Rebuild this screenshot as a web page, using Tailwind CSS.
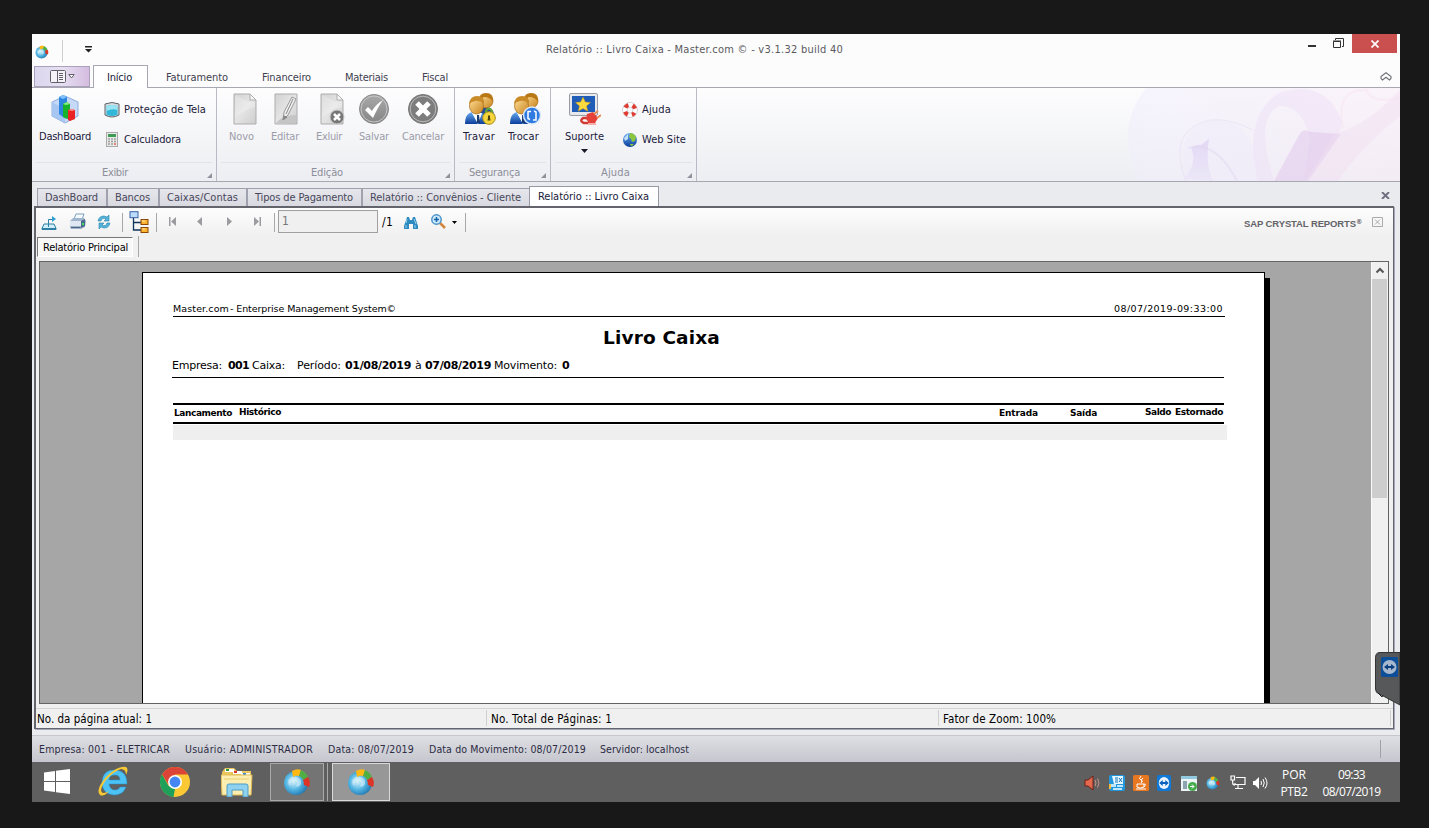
<!DOCTYPE html>
<html lang="pt-BR">
<head>
<meta charset="utf-8">
<title>Relatório :: Livro Caixa - Master.com</title>
<script src="https://cdn.jsdelivr.net/npm/@tailwindcss/browser@4"></script>
</head>
<body class="w-[1429px] h-[828px] overflow-hidden bg-[#181818] pl-8 pt-[34px] font-['DejaVu_Sans_Condensed','DejaVu_Sans',sans-serif] text-[11px] leading-[14px] text-[#20203a]">
<svg class="absolute w-0 h-0">
  <defs>
    <radialGradient id="gb" cx=".4" cy=".45" r=".65"><stop offset="0" stop-color="#d9f3fc"/><stop offset=".5" stop-color="#55b6e2"/><stop offset="1" stop-color="#1b6fab"/></radialGradient>
    <linearGradient id="gold" x1="0" y1="0" x2="1" y2="1"><stop offset="0" stop-color="#ffe09a"/><stop offset="1" stop-color="#c8831d"/></linearGradient>
    <linearGradient id="blue" x1="0" y1="0" x2="0" y2="1"><stop offset="0" stop-color="#69aef5"/><stop offset="1" stop-color="#0c3d9a"/></linearGradient>
    <linearGradient id="gray" x1="0" y1="0" x2="1" y2="1"><stop offset="0" stop-color="#d2d2d2"/><stop offset=".5" stop-color="#e4e4e4"/><stop offset="1" stop-color="#cdcdcd"/></linearGradient>
    <linearGradient id="dgray" x1="0" y1="0" x2="0" y2="1"><stop offset="0" stop-color="#a9a9a9"/><stop offset="1" stop-color="#858585"/></linearGradient>
  </defs>
  <symbol id="globe" viewBox="0 0 28 28">
    <circle cx="13" cy="15" r="12" fill="url(#gb)"/>
    <path d="M5 13q3-6 9-4 5 2 4 7-2 4-5 2 2-4-1-5-4-1-5 5-2-2-2-5" fill="#eafaff" opacity=".5"/>
    <path d="M9 3q5-3 9-1l-1 6q-4-1-7 1z" fill="#fcb813"/>
    <path d="M18 2q5 2 7 7l-5 3q-1-3-4-4z" fill="#51ae42"/>
    <path d="M25 9q3 5 1 10l-5-2q0-3-1-5z" fill="#dc3425"/>
  </symbol>
  <symbol id="people" viewBox="0 0 32 32">
    <path d="M13 24q0-11 7-10h4q7 2 7 13z" fill="#224f95"/>
    <circle cx="22" cy="8" r="7" fill="url(#gold)" stroke="#a66b16" stroke-width=".7"/>
    <path d="M15 7q0-7 7-7 8 0 7 9-3-5-9-5z" fill="#b97816"/>
    <path d="M1 31q0-12 9-12h5q8 2 8 12z" fill="url(#blue)"/>
    <path d="M8 20l6 11 4-11z" fill="#fff"/><path d="M13 22h2l1 8h-3z" fill="#193d71"/>
    <ellipse cx="12.500" cy="13" rx="7" ry="8" fill="url(#gold)" stroke="#a66b16" stroke-width=".7"/>
    <path d="M5 11q1-8 8-8 8 0 7 8-4-4-9-3-4 1-6 3" fill="#c98b28"/>
  </symbol>
  <symbol id="tv" viewBox="0 0 16 16"><rect width="16" height="16" rx="2" fill="#1078d6"/><circle cx="8" cy="8" r="6" fill="#e9f4ff"/><path d="M2.500 8l4-3v2h3V5l4 3-4 3V9h-3v2z" fill="#0a62bd"/></symbol>
  <symbol id="sheet" viewBox="0 0 24 32"><path d="M1 1h16l6 6v24H1z" fill="url(#gray)" stroke="#adadad"/><path d="M2 25Q10 17 22 14V9h-6L2 2z" fill="#fff" opacity=".25"/><path d="M17 1v6h6z" fill="#f7f7f7" stroke="#adadad"/></symbol>
  <symbol id="corner" viewBox="0 0 5 5"><path d="M5 0v5H0z" fill="#8f909c"/></symbol>
</svg>

<main class="flex flex-col w-[1368px] h-[768px] bg-[#e9ebee] whitespace-nowrap">

  <header class="flex h-[31px] bg-[#fcfcfd] shrink-0">
    <svg class="w-[14px] h-[14px] ml-[3px] mt-[11px]"><use href="#globe"/></svg>
    <i class="w-px h-[22px] mt-[6px] ml-[13px] bg-[#cfcfd3]"></i>
    <svg class="w-[7px] h-[7px] ml-[22px] mt-[12px]" viewBox="0 0 7 7"><path d="M0 0h7v1.500H0zM0 3h7L3.500 6.500z" fill="#222"/></svg>
    <span class="fit ml-[454px] mt-[9px] w-[297px] text-[#5a5a5e]">Relatório :: Livro Caixa - Master.com © - v3.1.32 build 40</span>
    <i class="w-[8px] h-[2px] ml-[465px] mt-[11px] bg-[#333]"></i>
    <svg class="w-[11px] h-[11px] ml-[17px] mt-[4px]" viewBox="0 0 11 11" fill="none" stroke="#333"><path d="M2.500 2V.5h8v8H9M.5 3.500h7v6h-7zM0 3h8"/></svg>
    <div class="w-[45px] h-[19px] ml-[8px] bg-[#c9504f] flex items-center justify-center"><svg class="w-[8px] h-[8px]" viewBox="0 0 8 8"><path d="M.5.5l7 7m0-7l-7 7" stroke="#fff" stroke-width="1.700"/></svg></div>
  </header>

  <nav class="flex h-[23px] bg-[#fcfcfd] border-b border-[#a6a7b0] shrink-0 text-[#3f3f50]">
    <div class="flex items-center justify-center gap-[2px] w-[56px] h-[21px] ml-[2px] mt-px border border-[#aaa2ba] bg-linear-to-r from-[#dcd6ee] via-[#e6e0f2] to-[#d5bce0]">
      <svg class="w-[16px] h-[13px]" viewBox="0 0 16 13" fill="none" stroke="#62616a"><rect x=".5" y=".5" width="15" height="12" rx="1" fill="#f5f3f8"/><path d="M7.500 0v13M9 3.500h4M9 5.500h4M9 7.500h4M9 9.500h4"/></svg>
      <svg class="w-[7px] h-[5px]" viewBox="0 0 7 5"><path d="M.8.5h5.400L3.500 4z" fill="#fff" stroke="#62616a"/></svg>
    </div>
    <div class="w-[55px] h-[23px] ml-[3px] border border-b-0 border-[#a6a7b0] bg-white pt-[5px] pl-[13px] text-[#20203a]"><span class="fit w-[25px]">Início</span></div>
    <span class="fit w-[62px] ml-[18px] mt-[6px]">Faturamento</span>
    <span class="fit w-[49px] ml-[34px] mt-[6px]">Financeiro</span>
    <span class="fit w-[43px] ml-[34px] mt-[6px]">Materiais</span>
    <span class="fit w-[26px] ml-[34px] mt-[6px]">Fiscal</span>
    <svg class="w-[12px] h-[9px] ml-[932px] mt-[7px]" viewBox="0 0 12 9"><path d="M1 4.500L6 .8l5 3.700v2L9.500 8 6 5.200 2.500 8 1 6.500z" fill="#fff" stroke="#6f7078" stroke-width="1.100"/></svg>
  </nav>

  <section class="flex h-[94px] shrink-0 border-b border-[#a6a7b0] bg-linear-to-b from-[#fdfdfe] to-[#edeef2]">
    <div class="w-[185px] border-r border-[#b9bac6] flex flex-col">
      <div class="flex h-[74px]">
        <div class="w-[52px] ml-[7px] pt-[5px] flex flex-col items-center">
          <svg class="w-[32px] h-[32px]" viewBox="0 0 32 32"><path d="M3 9l13-6 13 6v14l-13 7-13-7z" fill="#c6d9f7" stroke="#8cacdf"/><path d="M3 23V9l13 7v14z" fill="#a8c6f2"/><path d="M10 4l4-2 4 2v22l-4-2-4-3z" fill="#2c86df"/><path d="M10 4l4-2 4 2-4 2z" fill="#81c0fa"/><path d="M14 11l4-2 3 2v16l-7-3z" fill="#17b42b"/><path d="M14 11l4-2 3 2-4 1z" fill="#8bec80"/><path d="M19 17l4-1 3 1v9l-5 2-2-1z" fill="#e92323"/><path d="M19 17l4-1 3 1-3 1z" fill="#ff9a8e"/></svg>
          <span class="fit w-[52px] mt-[5px]">DashBoard</span>
        </div>
        <div class="ml-[13px] pt-[7px] grid grid-rows-[30px_30px] items-center">
          <div class="flex items-center gap-[4px]">
            <svg class="w-[16px] h-[16px]" viewBox="0 0 16 16"><path d="M1 2q7-3 14 0v11q-7 4-14 0z" fill="#d9dadd" stroke="#5b6067"/><path d="M2.500 4q5.500-2 11 0v9q-5.500 2-11 0z" fill="#33b7d8"/><path d="M2.500 4q5.500-2 11 0v4q-5.500-2-11 1z" fill="#98e4f3"/></svg>
            <span class="fit w-[82px]">Proteção de Tela</span>
          </div>
          <div class="flex items-center gap-[4px]">
            <svg class="w-[16px] h-[16px]" viewBox="0 0 16 16"><rect x="2.500" y=".5" width="11" height="14" fill="#e9e9e9" stroke="#aaa"/><path d="M4 2h8v3H4z" fill="#3f9a54"/><path d="M4 7h2m1 0h2m1 0h2M4 9.500h2m1 0h2m1 0h2M4 12h2m1 0h2" stroke="#a0a0a0" stroke-width="1.500"/><path d="M10 12h2" stroke="#e6604c" stroke-width="1.500"/></svg>
            <span class="fit w-[57px]">Calculadora</span>
          </div>
        </div>
      </div>
      <div class="flex h-[19px] mx-[4px] border-t border-[#e2e2e7] text-[#8d8e99]"><span class="fit w-[26px] ml-[66px] mt-[3px]">Exibir</span><svg class="w-[5px] h-[5px] ml-auto mt-[10px]"><use href="#corner"/></svg></div>
    </div>

    <div class="w-[238px] border-r border-[#b9bac6] flex flex-col text-[#9b9ca8]">
      <div class="flex h-[74px] pt-[5px]">
        <div class="flex flex-col w-[25px] ml-[12px]"><svg class="w-[24px] h-[32px] ml-[4px] shrink-0"><use href="#sheet"/></svg><span class="fit w-[25px] mt-[5px]">Novo</span></div>
        <div class="flex flex-col w-[28px] ml-[17px]"><svg class="w-[24px] h-[32px] ml-[3px] shrink-0" viewBox="0 0 24 32"><path d="M1 1h22v30H1z" fill="url(#gray)" stroke="#adadad"/><path d="M2 30q7-8 20-8v8z" fill="#c5c5c5"/><path d="M18 4l4 2-8 16-5 5 1-8z" fill="#eee" stroke="#999"/><path d="M12 21l7-15M9 27l1-4 3 1z" stroke="#888" fill="#888"/></svg><span class="fit w-[28px] mt-[5px]">Editar</span></div>
        <div class="flex flex-col w-[26px] ml-[17px]"><svg class="w-[25px] h-[32px] ml-[4px] shrink-0" viewBox="0 0 25 32"><use href="#sheet" width="24" height="32"/><circle cx="17" cy="24" r="7" fill="#777" stroke="#ccc"/><path d="M14 21l6 6m0-6l-6 6" stroke="#fff" stroke-width="2.500"/></svg><span class="fit w-[26px] mt-[5px]">Exluir</span></div>
        <div class="flex flex-col w-[30px] ml-[17px]"><svg class="w-[32px] h-[32px] -ml-px shrink-0" viewBox="0 0 32 32"><circle cx="16" cy="16" r="14.500" fill="url(#dgray)" stroke="#8a8a8a"/><circle cx="16" cy="16" r="13" fill="none" stroke="#c6c6c6"/><path d="M7 17l3-3 4 4q4-7 11-11-5 7-10 18z" fill="#fff"/></svg><span class="fit w-[30px] mt-[5px]">Salvar</span></div>
        <div class="flex flex-col w-[42px] ml-[13px]"><svg class="w-[32px] h-[32px] ml-[5px] shrink-0" viewBox="0 0 32 32"><circle cx="16" cy="16" r="14.500" fill="#7d7d7d" stroke="#777"/><circle cx="16" cy="16" r="12.800" fill="none" stroke="#bababa"/><path d="M10 10l12 12m0-12L10 22" stroke="#fff" stroke-width="5"/></svg><span class="fit w-[42px] mt-[5px]">Cancelar</span></div>
      </div>
      <div class="flex h-[19px] mx-[4px] border-t border-[#e2e2e7] text-[#8d8e99]"><span class="fit w-[32px] ml-[90px] mt-[3px]">Edição</span><svg class="w-[5px] h-[5px] ml-auto mt-[10px]"><use href="#corner"/></svg></div>
    </div>

    <div class="w-[96px] border-r border-[#b9bac6] flex flex-col">
      <div class="flex h-[74px] pt-[5px]">
        <div class="flex flex-col w-[32px] ml-[8px]"><svg class="w-[32px] h-[32px] ml-px shrink-0" viewBox="0 0 32 32"><use href="#people" width="32" height="32"/><path d="M22 21v-3q3-5 6 0v3" fill="none" stroke="#61a83b" stroke-width="2"/><circle cx="25" cy="25" r="6.300" fill="#f5d53b" stroke="#a78b1a"/><path d="M24 22.500h2v2l.5 3h-3l.5-3z" fill="#4e400a"/></svg><span class="fit w-[32px] mt-[5px]">Travar</span></div>
        <div class="flex flex-col w-[31px] ml-[13px]"><svg class="w-[32px] h-[32px] ml-px shrink-0" viewBox="0 0 32 32"><use href="#people" width="32" height="32"/><circle cx="23" cy="22.500" r="8.500" fill="#2f7be2" stroke="#dce9f9" stroke-width="1.500"/><path d="M22 18.500h-3v7l2 1M24 27h3v-8l-2-1" fill="none" stroke="#fff" stroke-width="1.500"/></svg><span class="fit w-[31px] mt-[5px]">Trocar</span></div>
      </div>
      <div class="flex h-[19px] mx-[4px] border-t border-[#e2e2e7] text-[#8d8e99]"><span class="fit w-[51px] ml-[10px] mt-[3px]">Segurança</span><svg class="w-[5px] h-[5px] ml-auto mt-[10px]"><use href="#corner"/></svg></div>
    </div>

    <div class="w-[146px] border-r border-[#b9bac6] flex flex-col">
      <div class="flex h-[74px]">
        <div class="flex flex-col w-[39px] ml-[14px] pt-[5px]"><svg class="w-[32px] h-[32px] ml-[4px] shrink-0" viewBox="0 0 32 32"><rect x=".5" y=".5" width="28" height="22" rx="1.500" fill="#e7e8eb" stroke="#9a9ca5"/><path d="M3 3h23v16H3z" fill="#205db9"/><path d="M14 4l2.300 5 5.200.5-4 3.500 1.300 5.200L14 15.500 9.200 18.200l1.300-5.200-4-3.500 5.200-.5z" fill="#ffdb3f" stroke="#c79513" stroke-width=".5"/><path d="M20 30h-5q-5-2-1-5h6" fill="none" stroke="#cf3c34" stroke-width="2.500"/><path d="M18 21l6-2 5 6-3 5h-6l-3-4z" fill="#e54138"/><path d="M25 21l4-3m-1 7l4-3" stroke="#e88a54" stroke-width="2"/><path d="M19 30h8v2h-8z" fill="#f4b1ac"/></svg><span class="fit w-[39px] mt-[5px]">Suporte</span><svg class="w-[7px] h-[4px] ml-[16px] mt-[5px]" viewBox="0 0 7 4"><path d="M0 0h7L3.500 4z" fill="#1a1a2a"/></svg></div>
        <div class="ml-[18px] pt-[7px] grid grid-rows-[30px_30px] items-center">
          <div class="flex items-center gap-[4px]"><svg class="w-[16px] h-[16px]" viewBox="0 0 16 16"><circle cx="8" cy="8" r="5.200" fill="none" stroke="#b8b8bd" stroke-width="5"/><circle cx="8" cy="8" r="5.200" fill="none" stroke="#fff" stroke-width="4"/><circle cx="8" cy="8" r="5.200" fill="none" stroke="#e03b31" stroke-width="4" stroke-dasharray="4.080" stroke-dashoffset="2" transform="rotate(45 8 8)"/></svg><span class="fit w-[29px]">Ajuda</span></div>
          <div class="flex items-center gap-[4px]"><svg class="w-[16px] h-[16px]" viewBox="0 0 16 16"><circle cx="8" cy="8" r="7" fill="url(#blue)"/><path d="M8 1q4 0 6 4l-1 4-3 1-1-3-2-2zM8 12l4 0-2 2-2-1z" fill="#8cc63f"/><path d="M2 6l4-4v5l-3 2z" fill="#bfe0fa"/></svg><span class="fit w-[44px]">Web Site</span></div>
        </div>
      </div>
      <div class="flex h-[19px] mx-[4px] border-t border-[#e2e2e7] text-[#8d8e99]"><span class="fit w-[29px] ml-[46px] mt-[3px]">Ajuda</span><svg class="w-[5px] h-[5px] ml-auto mt-[10px]"><use href="#corner"/></svg></div>
    </div>

    <svg class="w-[280px] h-[93px] ml-auto" viewBox="0 0 280 93">
      <defs>
        <linearGradient id="sw" x1="0" y1="0" x2="1" y2="0"><stop offset="0" stop-color="#f0eefc"/><stop offset="1" stop-color="#f8eaf6"/></linearGradient>
        <linearGradient id="vi" x1="0" y1="0" x2="0" y2="1"><stop offset="0" stop-color="#cdb8f0"/><stop offset="1" stop-color="#e6def6"/></linearGradient>
      </defs>
      <path d="M26 0Q-6 40 18 93H280V0z" fill="url(#sw)" opacity=".55"/>
      <path d="M66 93Q53 38 95 32q38 0 48 61z" fill="#efebfa" opacity=".5"/>
      <path d="M64 91q14-16 7-31 6-4 10-3l8-6q-4 26 4 42z" fill="url(#vi)" opacity=".4"/>
      <path d="M68 60q28-8 49 33" fill="none" stroke="#e0d4f0" stroke-width="2" opacity=".45"/>
      <path d="M66 93Q46 42 90 32q20-2 43 10" fill="none" stroke="#e6dcf2" opacity=".6"/>
      <path d="M138 93Q122 28 159 5q42-13 59 20 6 10 2 17l-36 51 6-44q-8-32-31-31-25 12-5 75z" fill="#eedff5" opacity=".5"/>
      <path d="M154 93l25-46q4-7 12-3l30 2-33 47z" fill="#dfc6ec" opacity=".5"/>
      <path d="M214 46q32-8 66-44v26q-40 32-62 65h-31z" fill="#f1dcf0" opacity=".4"/>
      <path d="M223 40q-8-40 24-38M246 0q2 16 34 10" stroke="#f7e2ef" stroke-width="2" fill="none" opacity=".4"/>
    </svg>
  </section>

  <div class="flex items-end h-[24px] shrink-0 pl-[5px] text-[#47475a] bg-[#e9ebee]">
    <div class="w-[70px] h-[18px] border border-b-0 border-[#a0a1ae] bg-linear-to-b from-[#e6e6ec] to-[#d9d9e1] pl-[7px] pt-[2px]"><span class="fit w-[53px]">DashBoard</span></div>
    <div class="w-[52px] h-[18px] border border-b-0 border-[#a0a1ae] bg-linear-to-b from-[#e6e6ec] to-[#d9d9e1] pl-[7px] pt-[2px]"><span class="fit w-[35px]">Bancos</span></div>
    <div class="w-[88px] h-[18px] border border-b-0 border-[#a0a1ae] bg-linear-to-b from-[#e6e6ec] to-[#d9d9e1] pl-[7px] pt-[2px]"><span class="fit w-[71px]">Caixas/Contas</span></div>
    <div class="w-[115px] h-[18px] border border-b-0 border-[#a0a1ae] bg-linear-to-b from-[#e6e6ec] to-[#d9d9e1] pl-[7px] pt-[2px]"><span class="fit w-[98px]">Tipos de Pagamento</span></div>
    <div class="w-[167px] h-[18px] border border-b-0 border-r-0 border-[#a0a1ae] bg-linear-to-b from-[#e6e6ec] to-[#d9d9e1] pl-[7px] pt-[2px]"><span class="fit w-[151px]">Relatório :: Convênios - Cliente</span></div>
    <div class="w-[130px] h-[20px] border border-b-0 border-[#9899a5] bg-white pl-[8px] pt-[3px] text-[#20203a]"><span class="fit w-[111px]">Relatório :: Livro Caixa</span></div>
    <svg class="w-[9px] h-[7px] ml-[722px] mb-[7px]" viewBox="0 0 9 7"><path d="M1 0l7 7M8 0L1 7" stroke="#6d6e80" stroke-width="1.900"/></svg>
  </div>

  <section class="flex flex-col w-[1360px] h-[523px] ml-[2px] shrink-0 border-[1.500px] border-t-2 border-l-2 border-[#63646c] bg-[#f0f0f0] text-black shadow-[1px_1px_0_#a3a7ba]">
    <div class="flex h-[28px] shrink-0 bg-linear-to-b from-[#fdfdfd] to-[#f0f0f0]">
      <svg class="w-[16px] h-[14px] ml-[5px] mt-[8px]" viewBox="0 0 16 14" fill="none" stroke="#2d7fa5"><path d="M3 8L1 12.500h14L13 8z" fill="#cfeffa"/><path d="M1 12.500h14v1H1zM7.500 11V3.500H12" /><path d="M11 0v6l4-3z" fill="#2d9fd0" stroke="none"/></svg>
      <svg class="w-[17px] h-[16px] ml-[12px] mt-[5px]" viewBox="0 0 17 16"><path d="M5 6l2-5h8l-2 6z" fill="#f5faff" stroke="#7f9fbb"/><path d="M1 8l3-3h11l2 3-1 6-4 2H2l-1-2z" fill="#9fb4cd"/><path d="M1 8h11v5H1z" fill="#dfe8f2"/><path d="M2 14h9l1 1H2z" fill="#506683"/><path d="M12 8l4-2v7l-4 2z" fill="#4c688a"/><path d="M13 10h2v2h-2z" fill="#3fe063"/></svg>
      <svg class="w-[14px] h-[14px] ml-[11px] mt-[7px]" viewBox="0 0 14 14"><path d="M1 6q1-5 6-5l3 1 2-2v6H7l2-2Q5 2 4 6zM13 8q-1 5-6 5l-3-1-2 2V8h5l-2 2q4 2 5-2z" fill="#56b4da" stroke="#2583ad" stroke-width=".6"/></svg>
      <i class="w-px h-[19px] ml-[11px] mt-[5px] bg-[#a8a8a8]"></i>
      <svg class="w-[20px] h-[22px] ml-[6px] mt-[3px]" viewBox="0 0 20 22"><path d="M4.500 6v13H12M4.500 11.500H12" fill="none" stroke="#12335c" stroke-width="1.300"/><rect x="1" y=".7" width="8" height="6" fill="#bcdcfb" stroke="#3a62a5"/><rect x="12" y="8.500" width="7" height="5" fill="#ffb331" stroke="#8d4706"/><rect x="12" y="16.500" width="7" height="5" fill="#ffb331" stroke="#8d4706"/><path d="M13 10h3m-3 8h3" stroke="#ffe9ae"/></svg>
      <i class="w-px h-[19px] ml-[7px] mt-[5px] bg-[#a8a8a8]"></i>
      <svg class="w-[7px] h-[9px] ml-[12px] mt-[9px]" viewBox="0 0 7 9" fill="#9c9ca0"><path d="M0 0h1.500v9H0zM7 0v9L2 4.500z"/></svg>
      <svg class="w-[5px] h-[9px] ml-[21px] mt-[9px]" viewBox="0 0 5 9" fill="#9c9ca0"><path d="M5 0v9L0 4.500z"/></svg>
      <svg class="w-[5px] h-[9px] ml-[25px] mt-[9px]" viewBox="0 0 5 9" fill="#9c9ca0"><path d="M0 0v9l5-4.500z"/></svg>
      <svg class="w-[7px] h-[9px] ml-[22px] mt-[9px]" viewBox="0 0 7 9" fill="#9c9ca0"><path d="M5.500 0H7v9H5.500zM0 0v9l5-4.500z"/></svg>
      <i class="w-px h-[19px] ml-[13px] mt-[5px] bg-[#a8a8a8]"></i>
      <div class="w-[100px] h-[23px] ml-[3px] mt-[2px] border border-[#a0a0a0] bg-[#f0f0f0] pl-[3px] pt-[3px] text-[12px] text-[#777]">1</div>
      <span class="fit w-[11px] ml-[4px] mt-[7px] text-[12px]">/1</span>
      <svg class="w-[14px] h-[12px] ml-[11px] mt-[9px]" viewBox="0 0 14 12"><path d="M3 0h2l1 3h2l1-3h2l3 9v3H9V7H5v5H0V9z" fill="#2f8abf"/><path d="M2 6l1-4m7 0l2 5M2 11V8m9 3V8" stroke="#94d1ef" fill="none"/></svg>
      <svg class="w-[15px] h-[15px] ml-[13px] mt-[6px]" viewBox="0 0 15 15"><path d="M9 9l5 5" stroke="#d3853f" stroke-width="2.500"/><circle cx="5.500" cy="5.500" r="4.700" fill="#cdeafc" stroke="#4c93c9" stroke-width="1.500"/><path d="M5.500 3v5M3 5.500h5" stroke="#1864a8" stroke-width="1.500"/></svg>
      <svg class="w-[5px] h-[3px] ml-[6px] mt-[13px]" viewBox="0 0 5 3"><path d="M0 0h5L2.500 3z"/></svg>
      <i class="w-px h-[19px] ml-[8px] mt-[5px] bg-[#a8a8a8]"></i>
      <span class="fit w-[112px] ml-[778px] mt-[9px] font-['Liberation_Sans',sans-serif] font-bold text-[9.500px] text-[#636368]">SAP CRYSTAL REPORTS</span><span class="mt-[7px] w-[6px] text-[7px] font-bold text-[#636368]">®</span>
      <svg class="w-[11px] h-[10px] ml-[10px] mt-[9px]" viewBox="0 0 11 10" fill="none" stroke="#aaa"><path d="M.5.5h10v9H.5zM3 2.500l5 5m0-5l-5 5"/></svg>
    </div>
    <div class="flex h-[25px] shrink-0">
      <div class="w-[96px] h-[20px] ml-[1px] mt-px border border-t-[#777] border-l-[#777] border-b-white border-r-white bg-[#f8f8f8] pl-[5px] pt-[3px]"><span class="fit w-[85px]">Relatório Principal</span></div>
      <i class="w-px h-[21px] ml-[5px] bg-[#a8a8a8]"></i>
    </div>
    <div class="flex w-[1350px] h-[443px] ml-[3px] shrink-0 border border-[#646464] bg-[#a6a6a6] overflow-hidden">
      <div class="flex flex-col w-[1123px] h-[440px] ml-[102px] mt-[10px] bg-white border border-black border-b-0 shrink-0 font-['DejaVu_Sans',sans-serif]">
        <div class="flex h-[44px] w-[1052px] ml-[30px] pt-[29px] border-b border-black text-[9.500px]">
          <span class="fit w-[56px] h-[13px]">Master.com</span><span class="fit w-[166px] ml-[1px]">- Enterprise Management System©</span>
          <span class="fit w-[109px] ml-auto mr-[2px]">08/07/2019-09:33:00</span>
        </div>
        <h1 class="fit w-[117px] ml-[460px] mt-[9px] h-[24px] text-[18.500px] leading-[24px] font-bold">Livro Caixa</h1>
        <div class="flex w-[1052px] ml-[29px] mt-[9px] h-[19px] border-b border-black text-[11px]">
          <span class="fit w-[50px]">Empresa:</span><b class="fit w-[21px] ml-[6px]">001</b><span class="fit w-[33px] ml-[3px]">Caixa:</span><span class="fit w-[44px] ml-[12px]">Período:</span><b class="fit w-[66px] ml-[4px]">01/08/2019</b><span class="ml-[4px] w-[7px]">à</span><b class="fit w-[66px] ml-[3px]">07/08/2019</b><span class="fit w-[63px] ml-[3px]">Movimento:</span><b class="ml-[5px]">0</b>
        </div>
        <div class="flex w-[1051px] ml-[30px] mt-[25px] h-[21px] border-y-2 border-black font-bold text-[9px]">
          <span class="fit w-[58px] ml-px mt-px">Lancamento</span><span class="fit w-[42px] ml-[7px]">Histórico</span><span class="fit w-[39px] ml-[718px] mt-px">Entrada</span><span class="fit w-[27px] ml-[32px] mt-px">Saída</span><span class="fit w-[26px] ml-[48px]">Saldo</span><span class="fit w-[48px] ml-[4px]">Estornado</span>
        </div>
        <div class="w-[1054px] h-[15px] ml-[30px] mt-px bg-[#efefef]"></div>
      </div>
      <i class="w-[5px] h-[440px] mt-[16px] bg-black shrink-0"></i>
      <div class="w-[17px] ml-auto bg-[#f0f0f0] border-l border-[#fafafa] flex flex-col">
        <svg class="w-[16px] h-[17px]" viewBox="0 0 16 17"><path d="M4.500 10.500L8 7l3.500 3.500" fill="none" stroke="#555" stroke-width="2"/></svg>
        <i class="h-[219px] w-[15px] bg-[#cdcdcd]"></i>
      </div>
    </div>
    <div class="flex h-[19px] mt-[4px] border-t border-[#d5d5d5] text-[11.500px] pt-[3px]">
      <span class="fit w-[115px] ml-px">No. da página atual: 1</span>
      <i class="w-px h-[16px] -mt-[2px] ml-[334px] bg-[#cfcfcf]"></i><span class="fit w-[121px] ml-[4px]">No. Total de Páginas: 1</span>
      <i class="w-px h-[16px] -mt-[2px] ml-[326px] bg-[#cfcfcf]"></i><span class="fit w-[113px] ml-[4px]">Fator de Zoom: 100%</span>
      <i class="w-px h-[16px] -mt-[2px] ml-auto mr-[2px] bg-[#cfcfcf]"></i>
    </div>
  </section>

  <footer class="flex h-[27px] mt-[6px] shrink-0 border-t border-[#c6c7cd] bg-linear-to-b from-[#dedfe4] to-[#c6c7ce] pl-[7px] pt-[6px] text-[10.500px] gap-[15px] text-[#2c2c44]">
    <span class="fit w-[131px]">Empresa: 001 - ELETRICAR</span><span class="fit w-[128px]">Usuário: ADMINISTRADOR</span><span class="fit w-[86px]">Data: 08/07/2019</span><span class="fit w-[157px]">Data do Movimento: 08/07/2019</span><span class="fit w-[89px] -ml-px">Servidor: localhost</span>
    <i class="w-px h-[18px] -mt-[2px] ml-auto mr-[19px] bg-[#9fa0a8]"></i>
  </footer>

  <div class="flex h-[40px] shrink-0 bg-[#5f5f5f] text-white">
    <svg class="w-[26px] h-[25px] ml-[12px] mt-[7px]" viewBox="0 0 26 25"><path d="M0 3.500L11 2v10H0zM12 1.800L26 0v12H12zM0 13h11v10L0 21.500zM12 13h14v12l-14-1.800z" fill="#fff"/></svg>
    <svg class="w-[30px] h-[32px] ml-[28px] mt-[3px]" viewBox="0 0 30 32"><path fill-rule="evenodd" d="M29 19H11q1 6 6 6 4 0 5-3h6q-3 8-12 8Q4 29 4 17 5 5 16 5q13 0 13 14zM11 15h11q0-5-5-5-6 0-6 5z" fill="#4cc3f4" stroke="#2394d2" stroke-width=".5"/><path d="M2 30Q-3 25 8 12 20 0 28 2q3 2 0 8 0-6-5-6Q16 6 8 15 0 26 5 28q3 0 6-2-5 6-9 4" fill="#f8c933"/></svg>
    <svg class="w-[30px] h-[30px] ml-[32px] mt-[5px]" viewBox="0 0 30 30"><circle cx="15" cy="15" r="15" fill="#fcc934"/><path d="M2 7.500A15 15 0 0 1 28 7.500H15L9 18.500z" fill="#db4437"/><path d="M2 7.500l6.500 11.200 6.500 3.300-1.500 8A15 15 0 0 1 2 7.500" fill="#1ea05b"/><circle cx="15" cy="15" r="7" fill="#fff"/><circle cx="15" cy="15" r="5.400" fill="#4487f4"/></svg>
    <svg class="w-[32px] h-[30px] ml-[31px] mt-[5px]" viewBox="0 0 32 30"><path d="M1 5l3-4h9l3 3h14v24H1z" fill="#eac65e"/><path d="M4 2h9v3H4zM12 4h9v3h-9zM20 6h9v3h-9z" fill="#fff"/><path d="M5 2h3v2H5z" fill="#2a9c42"/><path d="M13 4h3v2h-3z" fill="#d8382b"/><path d="M22 6h3v2h-3z" fill="#2e8cdd"/><path d="M0 8h31l-1 20H1z" fill="#fbeeb0" stroke="#e2bd56"/><path d="M3 12h25" stroke="#e9ce72"/><path d="M6 30V19q0-2 2-2h17q2 0 2 2v11h-5v-7H11v7z" fill="#8fd2f0" stroke="#4d9cc6"/></svg>
    <div class="w-[54px] h-[38px] ml-[17px] mt-px border border-[#a8a8a8] bg-[#747474] flex items-center justify-center"><svg class="w-[28px] h-[28px]"><use href="#globe"/></svg></div>
    <i class="w-px h-[38px] ml-[3px] mt-px bg-[#a8a8a8]"></i>
    <div class="w-[58px] h-[38px] ml-[4px] mt-px border border-[#d9d9d9] bg-[#979797] flex items-center justify-center"><svg class="w-[28px] h-[28px]"><use href="#globe"/></svg></div>
    <svg class="w-[16px] h-[16px] ml-[694px] mt-[13px]" viewBox="0 0 16 16"><path d="M1 5h3l5-4v14l-5-4H1z" fill="#e4694f" stroke="#6c2015"/><path d="M11 5q2 3 0 6m2.500-7.500q3 4.500 0 9" fill="none" stroke="#c79185"/></svg>
    <svg class="w-[16px] h-[16px] ml-[9px] mt-[13px]" viewBox="0 0 16 16"><rect width="16" height="16" rx="2" fill="#2496dc"/><path d="M3 1h11v8H5z" fill="#e8f7ff"/><path d="M6 3h3M6 5h3M6 7h3M10 3l3 4m0-4l-3 4" stroke="#1574b7"/><path d="M2 9h5v3H2zM8 10h6v2H8zM4 13h9v2H4z" fill="#bce8ff"/><path d="M0 9h2v5H0z" fill="#f0b83d"/></svg>
    <svg class="w-[16px] h-[16px] ml-[8px] mt-[13px]" viewBox="0 0 16 16"><rect width="16" height="16" rx="1.500" fill="#e87722"/><path d="M8 1q-3 3 0 4t0 3M10 3q-3 2-1 4M4 9h7v3q-4 2-7 0zM11 9q3 0 0 3M3 14h10" fill="none" stroke="#fff"/></svg>
    <svg class="w-[14px] h-[16px] ml-[8px] mt-[13px]" viewBox="0 0 16 16" preserveAspectRatio="none"><use href="#tv" width="16" height="16"/></svg>
    <svg class="w-[16px] h-[15px] ml-[10px] mt-[14px]" viewBox="0 0 16 15"><path d="M0 0h16v15H0z" fill="#edf4f6"/><path d="M0 0h16v3H0z" fill="#92c9de"/><path d="M2 5h4v8H2z" fill="#8ca4b0"/><circle cx="11.500" cy="10.500" r="4.500" fill="#45ab4a"/><path d="M9 10.500h4m-2-2l2 2-2 2" stroke="#fff" fill="none"/></svg>
    <svg class="w-[14px] h-[14px] ml-[9px] mt-[14px]"><use href="#globe"/></svg>
    <svg class="w-[16px] h-[15px] ml-[10px] mt-[13px]" viewBox="0 0 16 15" fill="none" stroke="#fff" stroke-width="1.200"><path d="M6 2.500h9v7H5V8M8 10v3M5 13.500h8M1 1h3.500v4H1zM2.700 5v3q0 2 2.500 2"/></svg>
    <svg class="w-[15px] h-[14px] ml-[7px] mt-[14px]" viewBox="0 0 15 14"><path d="M0 5h2l4-4v12L2 9H0z" fill="#fff"/><path d="M8 5q1 2 0 4m2-6q2.500 4 0 8m2-9.500q4 5.500 0 11" fill="none" stroke="#fff"/></svg>
    <div class="flex flex-col items-center ml-[12px] mt-[4px] w-[28px] font-['Open_Sans',sans-serif] text-[12px] leading-[17px]"><span class="fit w-[24px]">POR</span><span class="fit w-[27px]">PTB2</span></div>
    <div class="flex flex-col items-center ml-[14px] mt-[4px] w-[59px] font-['Open_Sans',sans-serif] text-[12px] leading-[17px]"><span class="fit w-[27px]">09:33</span><span class="fit w-[58px]">08/07/2019</span></div>
  </div>
</main>

<svg class="absolute left-[1375px] top-[652px] w-[25px] h-[54px]" viewBox="0 0 25 54"><path d="M25 .5H5q-4.500 0-4.500 5V37q0 4 4 5L25 53z" fill="#56585a" stroke="#333"/><path d="M3 41l4 4 1-2" fill="none" stroke="#222"/><rect x="6" y="5" width="17" height="20" rx="1.500" fill="#0c4f98"/><circle cx="14.500" cy="15" r="7" fill="#a6b8cd"/><path d="M9 15l4-3v2h3v-2l4 3-4 3v-2h-3v2z" fill="#0b3f80"/></svg>

<script>
// Spread each label's letters so that it fills its own column width,
// again whenever that width changes.
function fit(el) {
  el.style.letterSpacing = '0px';
  const range = document.createRange();
  range.selectNodeContents(el);
  const natural = range.getBoundingClientRect().width;
  el.style.letterSpacing = (el.clientWidth - natural) / el.textContent.length + 'px';
}
const observer = new ResizeObserver(entries => entries.forEach(e => fit(e.target)));
for (const el of document.querySelectorAll('.fit')) {
  el.style.display = 'block';
  el.style.flexShrink = '0';
  observer.observe(el);
}
</script>
</body>
</html>
